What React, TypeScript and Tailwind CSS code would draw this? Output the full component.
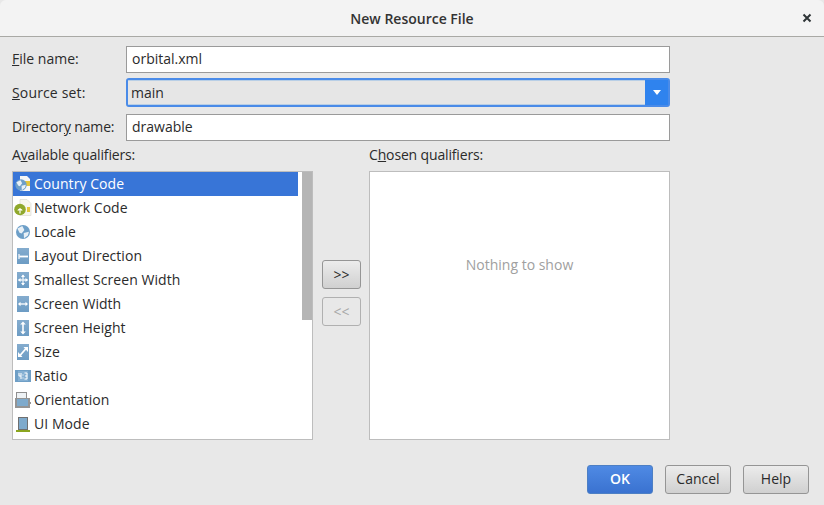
import React from "react";

const FONT = "font-['Open_Sans','Noto_Sans',sans-serif]";

const Tile: React.FC<{ children?: React.ReactNode }> = ({ children }) => (
  <svg width="16" height="16" viewBox="0 0 16 16" className="block">
    <defs>
      <linearGradient id="tile" x1="0" y1="0" x2="0" y2="1">
        <stop offset="0" stopColor="#84acce" />
        <stop offset="1" stopColor="#6c9cc4" />
      </linearGradient>
    </defs>
    <rect x="2" y="0" width="12" height="16" fill="url(#tile)" />
    {children}
  </svg>
);

const Globe: React.FC<{ x: number; y: number; r: number }> = ({ x, y, r }) => (
  <g>
    <circle cx={x} cy={y} r={r} fill="#6d9fc8" />
    <path
      d={`M${x - r * 0.8} ${y - r * 0.5}L${x - r * 0.1} ${y - r * 0.85}L${x + r * 0.2} ${y - r * 0.3}L${x - r * 0.2} ${y + r * 0.2}L${x - r * 0.5} ${y + r * 0.1}z`}
      fill="#e8f0f6"
    />
    <path
      d={`M${x + r * 0.1} ${y + r * 0.15}L${x + r * 0.85} ${y - r * 0.05}L${x + r * 0.7} ${y + r * 0.5}L${x + r * 0.15} ${y + r * 0.9}z`}
      fill="#e8f0f6"
    />
  </g>
);

const icons: Record<string, React.ReactNode> = {
  "Country Code": (
    <svg width="16" height="16" viewBox="0 0 16 16" className="block">
      <path d="M5 0h7l3 3v12H5z" fill="#f6f6f6" />
      <rect x="10" y="5" width="5" height="5" fill="#e3c63c" />
      <Globe x={6} y={9} r={5.7} />
    </svg>
  ),
  "Network Code": (
    <svg width="18" height="18" viewBox="0 0 18 18" className="block">
      <path d="M6 0.5h7l4 4V16.5H6z" fill="#f7f6ee" stroke="#d6d6d0" strokeWidth="0.6" />
      <rect x="13" y="8" width="3" height="5" fill="#e3c63c" />
      <circle cx="6" cy="10.5" r="5.8" fill="#8fa82c" />
      <path d="M6 9v5.5M3.8 11.5a2.8 2.8 0 0 1 4.4 0" stroke="#fff" strokeWidth="1.2" fill="none" />
    </svg>
  ),
  Locale: (
    <svg width="16" height="16" viewBox="0 0 16 16" className="block">
      <Globe x={8} y={8} r={7} />
    </svg>
  ),
  "Layout Direction": (
    <Tile>
      <path d="M4 8.5h9" stroke="#fff" strokeWidth="1.8" />
      <path d="M4 6v5" stroke="#e8f0f6" strokeWidth="1.4" />
    </Tile>
  ),
  "Smallest Screen Width": (
    <Tile>
      <path d="M8 3v10M3.5 8h9" stroke="#e8f0f6" strokeWidth="1.3" />
      <path d="M6 5l2-2.5L10 5zM6 11l2 2.5L10 11zM5.5 6L3 8l2.5 2zM10.5 6L13 8l-2.5 2z" fill="#fff" />
    </Tile>
  ),
  "Screen Width": (
    <Tile>
      <path d="M4 8h8" stroke="#fff" strokeWidth="1.3" />
      <path d="M5.5 5.8L3 8l2.5 2.2zM10.5 5.8L13 8l-2.5 2.2z" fill="#fff" />
    </Tile>
  ),
  "Screen Height": (
    <Tile>
      <path d="M8 3v10" stroke="#fff" strokeWidth="1.6" />
      <path d="M5.2 4.5L8 1.5l2.8 3zM5.2 11.5L8 14.5l2.8-3z" fill="#fff" />
    </Tile>
  ),
  Size: (
    <Tile>
      <path d="M5 11.5l6-7" stroke="#fff" strokeWidth="1.8" />
      <path d="M8.5 3H13v5zM3 13V8l4.5 5z" fill="#fff" />
    </Tile>
  ),
  Ratio: (
    <svg width="16" height="12" viewBox="0 0 16 12" className="block">
      <rect width="16" height="12" fill="#6f9fc6" />
      <rect x="3" y="1" width="10" height="10" fill="#85b0d3" />
      <path d="M4 3v3h2M6 3v6M8 4.5v1M8 7.5v1M9.5 3H12v6H9.5M10 6h2" stroke="#fff" strokeWidth="1" fill="none" />
    </svg>
  ),
  Orientation: (
    <svg width="16" height="16" viewBox="0 0 16 16" className="block">
      <rect x="1.5" y="0.5" width="10" height="6" fill="#eef2f5" stroke="#8f8f8f" />
      <rect x="0" y="6" width="15" height="10" fill="#949494" />
      <rect x="15" y="10" width="1" height="2" fill="#949494" />
      <rect x="2" y="7" width="11" height="7" fill="#7eaacc" />
    </svg>
  ),
  "UI Mode": (
    <svg width="14" height="15" viewBox="0 0 14 15" className="block">
      <rect x="2.5" y="0.5" width="9" height="12" fill="#7eaacc" stroke="#6f6f6f" />
      <rect x="0" y="13" width="14" height="2" fill="#8ba51f" />
    </svg>
  ),
};

const qualifiers = Object.keys(icons);

const ActionButton: React.FC<{ label: string; primary?: boolean }> = ({ label, primary }) => (
  <button
    type="button"
    className={
      primary
        ? "w-[66px] h-[29px] pb-[2px] rounded-[3px] border border-[#4d7fc4] bg-gradient-to-b from-[#4f8ae4] to-[#3a72d0] text-white font-semibold text-[14px]"
        : "w-[66px] h-[29px] pb-[2px] rounded-[3px] border border-[#959595] bg-gradient-to-b from-[#ececec] to-[#d0d0d0] text-[#2b2b2b] text-[14px]"
    }
  >
    {label}
  </button>
);

export default function App() {
  return (
    <div className={`${FONT} w-[824px] h-[505px] bg-[#e8e8e8] text-[14px] text-[#2b2b2b] flex flex-col overflow-hidden`}>
      <div className="relative h-[37px] shrink-0 bg-[#f3f3f3] border-b border-[#a9a9a5] flex items-center justify-center rounded-t-[6px]">
        <span className="font-semibold text-[#333]">New Resource File</span>
        <svg width="10" height="10" viewBox="0 0 10 10" className="absolute right-[12px] top-[13px]">
          <path d="M1.5 1.5l7 7M8.5 1.5l-7 7" stroke="#2e3436" strokeWidth="2" />
        </svg>
      </div>

      <div className="flex flex-col w-[670px] pl-[12px] pt-[9px]">
        <div className="flex items-center h-[27px]">
          <span className="w-[114px] pb-[2px]"><u>F</u>ile name:</span>
          <div className="w-[544px] h-[27px] bg-white border border-[#9a9a9a] pl-[5px] leading-[24px]">orbital.xml</div>
        </div>
        <div className="flex items-center h-[29px] mt-[5px]">
          <span className="w-[114px] tracking-[0.15px]"><u>S</u>ource set:</span>
          <div className="w-[544px] h-[29px] rounded-[3px] border-2 border-[#4a8be8] bg-[#e6e6e6] flex">
            <span className="flex-1 pl-[3px] leading-[23px] border-y border-[#b9cfe6]">main</span>
            <span className="w-[23px] bg-[#2f83ee] flex items-center justify-center">
              <svg width="10" height="7" viewBox="0 0 10 7"><path d="M1 1h8L5 6z" fill="#fff" /></svg>
            </span>
          </div>
        </div>
        <div className="flex items-center h-[27px] mt-[7px]">
          <span className="w-[114px] pb-[2px] tracking-[-0.15px]">Director<u>y</u> name:</span>
          <div className="w-[544px] h-[27px] bg-white border border-[#9a9a9a] pl-[5px] leading-[24px]">drawable</div>
        </div>

        <div className="flex mt-[4px]">
          <div className="w-[301px]">
            <div className="h-[26px] leading-[20px] tracking-[-0.15px]">A<u>v</u>ailable qualifiers:</div>
            <div className="h-[269px] bg-white border border-[#bdbdbd] flex">
              <div className="w-[285px]">
                {qualifiers.map((name, i) => (
                  <div
                    key={name}
                    className={`h-[24px] flex items-center ${i === 0 ? "bg-[#3875d7] text-white" : ""}`}
                  >
                    <span className="w-[20px] mr-[1px] flex justify-center shrink-0">{icons[name]}</span>
                    <span className="pb-[2px] tracking-[0.05px]">{name}</span>
                  </div>
                ))}
              </div>
              <div className="ml-auto w-[10px] h-[148px] bg-[#b5b5b5]" />
            </div>
          </div>

          <div className="w-[56px] flex flex-col items-center pt-[115px]">
            <div className="flex flex-col gap-[8px] ml-[1px]">
              <button type="button" className="w-[39px] h-[29px] rounded-[3px] border border-[#959595] bg-gradient-to-b from-[#ececec] to-[#d0d0d0] text-[14px] text-[#2b2b2b]">&gt;&gt;</button>
              <button type="button" className="w-[39px] h-[29px] rounded-[3px] border border-[#b0b0b0] bg-[#e8e8e8] text-[14px] text-[#a8a8a8]">&lt;&lt;</button>
            </div>
          </div>

          <div className="w-[301px]">
            <div className="h-[26px] leading-[20px] tracking-[-0.15px]">C<u>h</u>osen qualifiers:</div>
            <div className="h-[269px] bg-white border border-[#bdbdbd] pt-[83px] text-center leading-[20px] text-[#a0a0a0]">
              Nothing to show
            </div>
          </div>
        </div>
      </div>

      <div className="flex justify-end gap-[12px] pr-[15px] mt-[25px]">
        <ActionButton label="OK" primary />
        <ActionButton label="Cancel" />
        <ActionButton label="Help" />
      </div>
    </div>
  );
}
